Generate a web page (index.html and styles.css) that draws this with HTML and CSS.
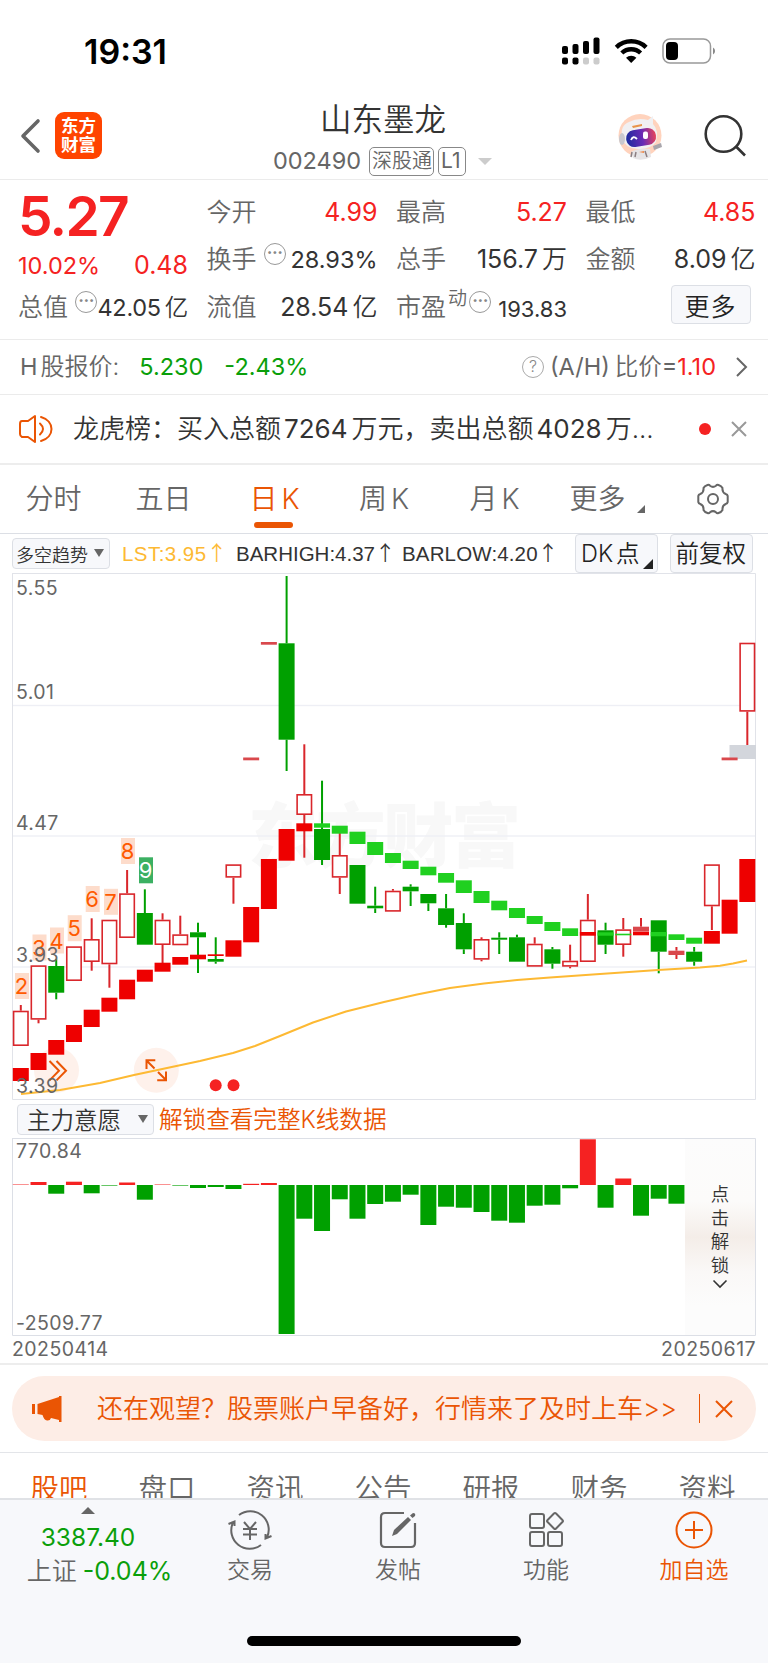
FILE: index.html
```html
<!DOCTYPE html>
<html lang="zh-CN">

<head>
    <meta charset="UTF-8">
    <meta name="viewport" content="width=device-width, initial-scale=1.0">
    <title>山东墨龙 002490</title>
    <link rel="stylesheet" href="styles.css">
</head>

<body>

    <div class="status-bar">
        <span class="clock">19:31</span>
        <svg class="status-icons" width="156" height="30" viewBox="560 36 156 30">
            <g fill="#000">
                <rect x="562" y="46" width="6" height="8" rx="2"/>
                <rect x="572.500" y="44" width="6" height="10" rx="2"/>
                <rect x="583" y="41" width="6" height="13" rx="2"/>
                <rect x="593.500" y="37.500" width="6" height="16.500" rx="2"/>
                <rect x="562" y="57.500" width="6" height="7" rx="2"/>
                <rect x="572.500" y="57.500" width="6" height="7" rx="2"/>
            </g>
            <g fill="#ccc">
                <rect x="583" y="57.500" width="6" height="7" rx="2"/>
                <rect x="593.500" y="57.500" width="6" height="7" rx="2"/>
            </g>
            <g fill="none" stroke="#000" stroke-width="4.400">
                <path d="M616.300 47.300a21.500 21.500 0 0 1 29.800 0"/>
                <path d="M621.800 53a13.600 13.600 0 0 1 18.800 0"/>
            </g>
            <path d="M631.200 63l-5.200-5.200a7.600 7.600 0 0 1 10.400 0z"/>
            <rect x="663" y="39" width="47.500" height="24" rx="7" fill="none" stroke="#999" stroke-width="1.500"/>
            <rect x="666" y="42" width="12" height="18" rx="4"/>
            <path d="M713 47.500a4 4 0 0 1 0 7z" fill="#888"/>
        </svg>
    </div>

    <header class="header">
        <svg class="back" width="22" height="36" viewBox="0 0 22 36"><path d="M18 3L3 18l15 15" fill="none" stroke="#666" stroke-width="3.600" stroke-linecap="round" stroke-linejoin="round"/></svg>
        <div class="logo"><span>东方</span><span>财富</span></div>
        <div class="title">
            <h1>山东墨龙</h1>
            <div class="code">
                <span class="code-num">002490</span>
                <span class="tag">深股通</span>
                <span class="tag tag-l1">L1</span>
                <i class="tri-down"></i>
            </div>
        </div>
        <svg class="robot" width="46" height="48" viewBox="0 0 46 48">
            <circle cx="23" cy="22.500" r="21.500" fill="#ffd3bd"/>
            <path d="M14 39q9-5 19-3l1 8q-10 5-18 1z" fill="#e6e4e6"/>
            <path d="M15 39l-1 5m5-5l-1 5m10-6l2 6" stroke="#8c7f82" stroke-width="1.500" fill="none"/>
            <path d="M36 33l8-3 1 4-8 3z" fill="#a9a6ac"/>
            <path d="M5 25Q3 12 12 9q9-5 19-2l5-4 0 8q6 6 3 18-4 6-16 7-14 1-18-11z" fill="#f1f0f2"/>
            <ellipse cx="5" cy="26" rx="3" ry="6" fill="#c9c8ce"/>
            <path d="M15 13l10-2v2l-9 2z" fill="#e8944a"/>
            <rect x="9" y="16" width="30" height="17" rx="8" transform="rotate(-9 24 24)" fill="url(#visor)"/>
            <path d="M14 27q2-5 6-1" stroke="#fff" stroke-width="1.800" fill="none"/>
            <rect x="26" y="18.500" width="5" height="7.500" rx="2" fill="#fff"/>
            <path d="M22 39l5-1v2z" fill="#ee8848"/>
            <defs><linearGradient id="visor"><stop offset="0" stop-color="#1c2b9e"/><stop offset=".55" stop-color="#6a2bb5"/><stop offset="1" stop-color="#e8435a"/></linearGradient></defs>
        </svg>
        <svg class="search" width="44" height="44" viewBox="0 0 44 44"><g fill="none" stroke="#333" stroke-width="2.600"><circle cx="20.500" cy="20" r="17.800"/><path d="M32.500 32l9.500 9.500"/></g></svg>
    </header>

    <section class="quote">
        <div class="price-block">
            <div class="price">5.27</div>
            <div class="cell change"><span class="pct">10.02%</span><b class="up">0.48</b></div>
        </div>
        <div class="cell"><span>今开</span><b class="up">4.99</b></div>
        <div class="cell"><span>最高</span><b class="up">5.27</b></div>
        <div class="cell"><span>最低</span><b class="up">4.85</b></div>
        <div class="cell"><span>换手</span><i class="dots">···</i><b class="small">28.93%</b></div>
        <div class="cell"><span>总手</span><b>156.7<em>万</em></b></div>
        <div class="cell"><span>金额</span><b>8.09<em>亿</em></b></div>
        <div class="cell"><span>总值</span><i class="dots">···</i><b class="small tight">42.05<em>亿</em></b></div>
        <div class="cell"><span>流值</span><b>28.54<em>亿</em></b></div>
        <div class="cell"><span>市盈</span><sup>动</sup><i class="dots near">···</i><b class="smaller">193.83</b></div>
        <div class="cell"><button class="more">更多</button></div>
    </section>

    <section class="h-share">
        <span class="h-label">H<em>股报价:</em></span>
        <span class="down h-price">5.230</span>
        <span class="down">-2.43%</span>
        <span class="help">?</span>
        <span class="ratio">(A/H)<em>比价</em>=<span class="up">1.10</span></span>
        <svg width="14" height="22" viewBox="0 0 14 22"><path d="M2 2l9 9-9 9" fill="none" stroke="#666" stroke-width="2"/></svg>
    </section>

    <section class="notice">
        <svg width="34" height="30" viewBox="0 0 34 30"><g fill="none" stroke="#ea5504" stroke-width="2" stroke-linejoin="round" stroke-linecap="round"><path d="M16 2v26l-7-5H3q-2-1-2-3V10q0-3 2-3h6z"/><path d="M21 9.500q6 5.500 0 11M22 3c14 4 14 20 0 24"/></g></svg>
        <p>龙虎榜：买入总额<em>7264</em>万元，卖出总额<em>4028</em>万...</p>
        <i class="red-dot"></i>
        <svg width="18" height="18" viewBox="0 0 18 18"><path d="M2 2l14 14M16 2L2 16" stroke="#999" stroke-width="2"/></svg>
    </section>

    <nav class="tabs">
        <span class="tab-time">分时</span>
        <span>五日</span>
        <span class="active">日<em>K</em></span>
        <span>周<em>K</em></span>
        <span class="tab-month">月<em>K</em></span>
        <span class="tab-more">更多<i class="corner"></i></span>
        <span><svg width="34" height="34" viewBox="-17 -17 34 34"><g fill="none" stroke="#666" stroke-width="2"><circle r="5"/><path stroke-linejoin="round" d="M-5.500-14Q-4-14.500-3-13.300Q0-11 3-13.300Q4-14.500 5.500-14Q8.500-13 9.500-11Q9-6.500 12.700-5Q14.500-4.500 14.700-3V3Q14.500 4.500 12.700 5Q9 6.500 9.500 11Q8.500 13 5.500 14Q4 14.500 3 13.300Q0 11-3 13.300Q-4 14.500-5.500 14Q-8.500 13-9.500 11Q-9 6.500-12.700 5Q-14.500 4.500-14.700 3V-3Q-14.500-4.500-12.700-5Q-9-6.500-9.500-11Q-8.500-13-5.500-14z"/></g></svg></span>
    </nav>

    <div class="indicator">
        <span class="select">多空趋势<i></i></span>
        <span class="lst">LST:3.95<u>↑</u></span>
        <span class="bar-high">BARHIGH:4.37<u>↑</u></span>
        <span class="bar-low">BARLOW:4.20<u>↑</u></span>
        <span class="box dk">DK<em>点</em><i></i></span>
        <span class="box">前复权</span>
    </div>

    <svg class="k-chart" id="k-chart" width="744" height="527" viewBox="12 573 744 527"></svg>

    <div class="sub-bar">
        <span class="select select-big">主力意愿<i></i></span>
        <span class="unlock-text">解锁查看完整K线数据</span>
    </div>

    <div class="sub-wrap">
        <svg id="sub-chart" width="744" height="198" viewBox="12 1138 744 198"></svg>
        <div class="lock">
            <span>点</span><span>击</span><span>解</span><span>锁</span>
            <svg width="16" height="10" viewBox="0 0 16 10"><path d="M1.500 1.500L8 8l6.500-6.500" fill="none" stroke="#333" stroke-width="1.600"/></svg>
        </div>
    </div>

    <div class="dates"><span>20250414</span><span>20250617</span></div>

    <div class="banner-row">
        <div class="banner">
            <svg width="32" height="28" viewBox="0 0 32 28" fill="#ea5504"><path d="M1 9h3v10H1zM6.500 9L28 2V1h2.500v26H28v-2l-8-2q-1 3-4 2.500T11.500 20L6.500 19z"/></svg>
            <p>还在观望？股票账户早备好，行情来了及时上车&gt;&gt;</p>
            <i></i>
            <svg width="18" height="18" viewBox="0 0 18 18"><path d="M1 1l16 16M17 1L1 17" stroke="#ea5504" stroke-width="2"/></svg>
        </div>
    </div>

    <nav class="info-tabs">
        <span class="active">股吧</span>
        <span>盘口</span>
        <span>资讯</span>
        <span>公告</span>
        <span>研报</span>
        <span>财务</span>
        <span>资料</span>
    </nav>

    <footer class="footer">
        <div class="index">
            <i></i>
            <div class="down">3387.40</div>
            <div class="index-row"><span>上证</span><span class="down">-0.04%</span></div>
        </div>
        <div class="action">
            <svg width="46" height="40" viewBox="-23 -20 46 40"><g fill="none" stroke="#666" stroke-width="2"><path d="M-11-15A18.500 18.500 0 0 1 17 7.500M21.500 6L15.500 8.500V4"/><path d="M11 15A18.500 18.500 0 0 1-17-7.500M-21.500-6L-15.500-8.500V-4"/><path d="M-6-8L0-1l6-7M0-1V10M-7-1H7M-7 4.500H7"/></g></svg>
            <span>交易</span>
        </div>
        <div class="action">
            <svg width="46" height="40" viewBox="-23 -20 46 40"><path d="M6-17H-13q-4 0-4 4V13q0 4 4 4H13q4 0 4-4V-7" fill="none" stroke="#666" stroke-width="2.200"/><path d="M-6 6l2-6L10-13l3 3L-1 4z" fill="#666"/><path d="M12-14.500l3-2.500q3 0 2 3l-2.500 2z" fill="#666"/></svg>
            <span>发帖</span>
        </div>
        <div class="action">
            <svg width="46" height="40" viewBox="-23 -20 46 40"><g fill="none" stroke="#666" stroke-width="2"><rect x="-16" y="-16" width="14" height="14" rx="2"/><rect x="-16" y="2" width="14" height="14" rx="2"/><rect x="2" y="2" width="14" height="14" rx="2"/><rect x="3" y="-15" width="12" height="12" rx="1.500" transform="rotate(45 9 -9)"/></g></svg>
            <span>功能</span>
        </div>
        <div class="action add">
            <svg width="46" height="40" viewBox="-23 -20 46 40"><g fill="none" stroke="#ea5504" stroke-width="2"><circle r="17.500"/><path d="M-9 0H9M0-9V9"/></g></svg>
            <span>加自选</span>
        </div>
        <div class="home-line"></div>
    </footer>

    <script src="chart.js"></script>
</body>

</html>
```
FILE: styles.css
```css
* {
    box-sizing: border-box;
}

body {
    margin: 0;
    width: 768px;
    height: 1663px;
    overflow: hidden;
    background: #fff;
    color: #333;
    font-family: Inter, "Noto Sans CJK SC", sans-serif;
    font-weight: 350;
    line-height: 1;
    display: flex;
    flex-direction: column;
}

body > * {
    flex: none;
}

svg {
    display: block;
    flex: none;
}

em, i, b, u {
    font-style: normal;
    font-weight: 350;
    text-decoration: none;
}

.up {
    color: #f52222;
    font-weight: 400;
}

.down {
    color: #0a9f0a;
    font-weight: 400;
}

/* status bar */
.status-bar {
    height: 92px;
    padding: 36px 52px 0 84px;
    display: flex;
    justify-content: space-between;
}

.clock {
    font-size: 34px;
    font-weight: 600;
    line-height: 31px;
    color: #000;
}

/* header */
.header {
    height: 88px;
    padding: 0 21px 0 20px;
    display: flex;
    border-bottom: 1px solid #ebebeb;
}

.back {
    margin-top: 26px;
}

.logo {
    width: 47px;
    height: 47px;
    margin: 20px 0 0 13px;
    border-radius: 9px;
    background: #ff4400;
    color: #fff;
    font-size: 17.500px;
    font-weight: 700;
    line-height: 19px;
    padding-top: 4px;
    display: flex;
    flex-direction: column;
    align-items: center;
}

.title {
    width: 562px;
    display: flex;
    flex-direction: column;
    align-items: center;
    margin-right: -48px;
}

.title h1 {
    margin: 10px 0 0;
    font-size: 31.500px;
    font-weight: 350;
    line-height: 36px;
}

.code {
    display: flex;
    align-items: center;
    height: 30px;
    margin-top: 8px;
    margin-left: -1px;
    color: #666;
}

.code-num {
    font-size: 23.500px;
    font-weight: 400;
    margin-right: 8px;
}

.tag {
    height: 29px;
    border: 1.500px solid #888;
    border-radius: 5px;
    font-size: 20px;
    line-height: 26px;
    padding: 0 2px;
    width: 65px;
    margin-right: 4px;
    white-space: nowrap;
}

.tag-l1 {
    width: 28px;
    font-size: 21px;
    font-weight: 400;
}

.tri-down {
    border: 7px solid transparent;
    border-top-color: #ccc;
    border-bottom: 0;
    margin-left: 8px;
}

.robot {
    margin-top: 21px;
    margin-left: auto;
}

.search {
    margin: 22px 0 0 40px;
}

/* quote */
.quote {
    height: 160px;
    padding: 8.500px 12.500px 0 18px;
    display: grid;
    grid-template-columns: 170px 171px 171px 170px;
    grid-template-rows: repeat(3, 47.500px);
    column-gap: 18.500px;
    border-bottom: 1px solid #ebebeb;
}

.price-block {
    grid-row: span 2;
}

.price {
    color: #f52222;
    font-size: 55px;
    font-weight: 600;
    line-height: 54px;
    letter-spacing: -1.700px;
}

.change {
    height: 40px;
    padding-top: 6px;
}

.change .pct {
    color: #f52222;
    font-size: 23.500px;
    font-weight: 400;
}

.cell {
    display: flex;
    align-items: center;
    color: #666;
    font-size: 25px;
    white-space: nowrap;
}

.cell b {
    margin-left: auto;
    color: #333;
    font-weight: 400;
}

.cell b.up {
    color: #f52222;
}

.cell b em {
    margin-left: 4px;
}

.cell .small {
    font-size: 23.500px;
}

.cell .tight {
    letter-spacing: -0.300px;
}

.cell .smaller {
    font-size: 22px;
    padding-top: 4px;
}

.cell sup {
    font-size: 19px;
    line-height: 19px;
    margin: -18px 0 0 2px;
    vertical-align: baseline;
}

.dots {
    width: 22px;
    height: 22px;
    border: 1.500px solid #999;
    border-radius: 50%;
    margin: -11px -10px 0 7px;
    color: #888;
    font-size: 18px;
    font-weight: 600;
    line-height: 18px;
    text-align: center;
    letter-spacing: -0.500px;
}

.dots.near {
    margin-left: 2px;
}

.more {
    margin: -5px 5px 0 auto;
    width: 80px;
    height: 39px;
    padding: 0;
    border: 1.500px solid #dcdfe5;
    border-radius: 4px;
    background: #f7f8fb;
    font: 350 25px/34px "Noto Sans CJK SC", sans-serif;
    letter-spacing: 1px;
    color: #222;
}

/* H share */
.h-share {
    height: 55px;
    padding: 0 19px 0 20px;
    display: flex;
    align-items: center;
    font-size: 23.500px;
    color: #666;
    border-bottom: 1px solid #ebebeb;
}

.h-label {
    font-weight: 400;
}

.h-label em {
    margin-left: 3px;
    font-size: 24px;
}

.h-price {
    margin: 0 21px 0 20px;
}

.help {
    margin: 0 6px 0 auto;
    width: 22px;
    height: 22px;
    border: 1.500px solid #aaa;
    border-radius: 50%;
    font-size: 16px;
    line-height: 19px;
    text-align: center;
    color: #888;
}

.ratio {
    margin-right: 19px;
    font-weight: 400;
}

.ratio em {
    margin-left: 5px;
}

/* notice */
.notice {
    height: 70px;
    padding: 0 20px 0 19px;
    display: flex;
    align-items: center;
    border-bottom: 2px solid #ededed;
}

.notice p {
    margin: 0 0 0 20px;
    font-size: 26px;
    white-space: nowrap;
}

.notice em {
    margin: 0 4px 0 3px;
    font-weight: 400;
}

.red-dot {
    width: 12px;
    height: 12px;
    border-radius: 50%;
    background: #f52222;
    margin: 0 19px 0 auto;
}

/* period tabs */
.tabs {
    height: 69px;
    display: grid;
    grid-template-columns: 109px 109px 113px 106px 112px 109px 110px;
    align-items: center;
    justify-items: center;
    font-size: 28px;
    color: #666;
    border-bottom: 1px solid #dcdfe5;
}

.tabs span {
    position: relative;
}

.tabs em {
    margin-left: 4px;
}

.tabs .tab-time {
    margin-right: 2px;
}

.tabs .tab-month {
    margin-left: 3px;
}

.tabs .tab-more {
    margin-right: 12px;
}

.tabs .active {
    color: #ea5504;
}

.tabs .active::after {
    content: "";
    position: absolute;
    left: 5px;
    bottom: -15px;
    width: 39px;
    height: 6px;
    border-radius: 3px;
    background: #ea5504;
}

.corner {
    position: absolute;
    right: -19px;
    bottom: 0;
    border: 4px solid #666;
    border-left-color: transparent;
    border-top-color: transparent;
}

/* indicator row */
.indicator {
    height: 39px;
    padding: 0 15.500px 0 12px;
    display: flex;
    align-items: center;
    font-family: "Liberation Sans", "Noto Sans CJK SC", sans-serif;
    font-size: 20.500px;
    white-space: nowrap;
}

.select {
    width: 98px;
    height: 31px;
    border: 1.500px solid #dcdfe5;
    border-radius: 4px;
    background: #f7f8fb;
    padding-left: 3px;
    font-family: "Noto Sans CJK SC", sans-serif;
    font-size: 18px;
    display: flex;
    align-items: center;
}

.select i {
    border: 5px solid transparent;
    border-top: 8px solid #666;
    border-bottom: 0;
    margin: -2px 0 0 6px;
}

.indicator u {
    font-family: "Noto Sans CJK SC", sans-serif;
    display: inline-block;
    width: 16px;
}

.lst {
    color: #fdb933;
    width: 101px;
    margin-left: 12px;
    letter-spacing: 0.450px;
}

.bar-high {
    width: 154px;
    margin-left: 13px;
}

.bar-low {
    margin-left: 12px;
    letter-spacing: 0.150px;
}

.box {
    position: relative;
    width: 83px;
    height: 39px;
    border: 1.500px solid #dcdfe5;
    border-radius: 4px;
    background: #f7f8fb;
    font: 350 23.500px/37px Inter, "Noto Sans CJK SC", sans-serif;
    padding-left: 5px;
    color: #222;
}

.dk {
    margin: 0 11.500px 0 auto;
}

.dk em {
    margin-left: 3px;
}

.dk i {
    position: absolute;
    right: 4px;
    bottom: 3px;
    border: 5.500px solid #222;
    border-left-color: transparent;
    border-top-color: transparent;
}

/* charts */
.k-chart {
    margin-left: 12px;
}

.axis {
    font: 400 19.500px Inter, sans-serif;
    fill: #666;
    letter-spacing: 0.400px;
}

.mark {
    font: 400 22px Inter, sans-serif;
    text-anchor: middle;
}

.watermark {
    font: 900 70px "Noto Sans CJK SC", sans-serif;
    fill: #f8f8f8;
}

.sub-bar {
    height: 38px;
    padding: 1px 0 0 17px;
    display: flex;
    align-items: center;
}

.select-big {
    width: 137px;
    font-size: 23.500px;
    padding-left: 9px;
}

.select-big i {
    margin-left: 17px;
}

.unlock-text {
    margin-left: 5px;
    color: #ea5504;
    font-size: 23.700px;
    letter-spacing: -0.100px;
}

.sub-wrap {
    height: 198px;
    padding-left: 12px;
    position: relative;
}

/* the unlock panel covers the last four bars */
.lock {
    position: absolute;
    left: 685px;
    top: 1px;
    width: 70px;
    height: 196px;
    padding-top: 44px;
    background: linear-gradient(#fcfcfc, #fcfbfa 32%, #f4ede8 50%, #faf8f7 68%, #fcfcfc 85%);
    display: flex;
    flex-direction: column;
    align-items: center;
    font-size: 18.500px;
    line-height: 23.500px;
}

.lock svg {
    margin-top: 2px;
}

.dates {
    height: 29px;
    padding: 0 12px;
    display: flex;
    justify-content: space-between;
    align-items: center;
    font-size: 19.500px;
    font-weight: 400;
    letter-spacing: 0.450px;
    color: #666;
    border-bottom: 2px solid #ededed;
}

/* banner */
.banner-row {
    height: 88px;
    padding: 11px 12px;
    border-bottom: 1px solid #e3e5e9;
}

.banner {
    height: 65px;
    border-radius: 33px;
    background: #fdede6;
    color: #ea5504;
    padding: 0 23px 0 19px;
    display: flex;
    align-items: center;
}

.banner p {
    margin: 0 0 0 34px;
    font-size: 26px;
    white-space: nowrap;
}

.banner i {
    width: 1px;
    height: 29px;
    background: #ea5504;
    margin: 0 15px 0 auto;
}

/* info tabs, cut off by the footer */
.info-tabs {
    height: 45px;
    overflow: hidden;
    padding: 19px 7px 0 5px;
    display: grid;
    grid-template-columns: repeat(7, 1fr);
    justify-items: center;
    font-size: 28.500px;
    line-height: 34px;
    color: #666;
}

.info-tabs .active {
    color: #ea5504;
}

/* footer */
.footer {
    height: 165px;
    border-top: 2px solid #e0e2e6;
    background: #f7f8fb;
    display: grid;
    grid-template-columns: 176px repeat(4, 148px);
    grid-template-rows: 136px 12px;
    color: #666;
    font-size: 23px;
}

.index {
    display: flex;
    flex-direction: column;
    align-items: center;
    padding-top: 7px;
    font-size: 24.500px;
}

.index > i {
    border: 7px solid transparent;
    border-bottom-color: #666;
    border-top: 0;
    margin-bottom: 11px;
}

.index-row {
    display: flex;
    margin: 9px 0 0 23px;
    gap: 6px;
    font-size: 25px;
}

.action {
    display: flex;
    flex-direction: column;
    align-items: center;
    gap: 9px;
    padding-top: 10px;
}

.add {
    color: #ea5504;
}

.home-line {
    grid-column: 1 / -1;
    justify-self: center;
    width: 274px;
    height: 10px;
    border-radius: 5px;
    background: #000;
}
```
FILE: chart.js
```js
const RED = '#d9262b';
const GREEN = '#00a000';
const STEP = 17.72;
const FIRST = 20.8;

// candles: [kind, high, top, bottom, low]; r = hollow red, g = solid green, d = dash, p = thin solid red
const candles = [
    ['r', 1005, 1010.7, 1046, 1046], ['r', 965.3, 965.3, 1019.7, 1023.3], ['g', 959.3, 966, 992.7, 999.3],
    ['r', 946.3, 946.3, 981, 981], ['r', 918.3, 939, 962, 970.7], ['r', 919.7, 919.7, 964.3, 987.7],
    ['r', 870, 893.3, 938, 938], ['g', 889.3, 913, 944.7, 944.7], ['r', 913.3, 919.7, 945, 963.3],
    ['r', 915.7, 934.3, 945.3, 945.3], ['g', 922.7, 932.3, 937.3, 973], ['g', 937.3, 959, 961.7, 963.7],
    ['r', 864.3, 864.3, 877.7, 903.7], ['d', 757.5, 757.5, 760.3, 760.3], ['d', 642, 642, 644.7, 644.7],
    ['g', 576, 643.3, 739.7, 771], ['r', 744.3, 794, 815, 857.7], ['g', 780.7, 829, 860, 865],
    ['r', 833, 855, 877.7, 894], ['g', 865, 865, 903.7, 903.7], ['g', 886.7, 905.7, 908.3, 913],
    ['r', 889, 890.7, 911.7, 911.7], ['g', 884.3, 886.7, 891.3, 906], ['g', 894, 894, 903.3, 911],
    ['g', 894, 908.3, 925, 927.7], ['g', 913.3, 923, 949.3, 954], ['r', 937.3, 939, 959.7, 961.3],
    ['g', 932.3, 937.7, 939.7, 954], ['g', 934.7, 937.3, 961.7, 961.7], ['r', 937.3, 943.7, 966.7, 966.7],
    ['g', 947, 949.3, 963.7, 968.7], ['r', 944.7, 960.7, 966.7, 968.3], ['r', 894, 919.7, 962, 962],
    ['g', 922.7, 930.3, 944.7, 954], ['r', 918, 929.3, 945, 956.7], ['p', 918, 926.7, 931.5, 931.5],
    ['g', 920.3, 920.3, 951.7, 973.3], ['p', 947, 950.7, 955, 959], ['g', 947, 951.7, 961.7, 965.7],
    ['r', 864.3, 864.3, 906.3, 930], ['d', 757.5, 757.5, 760.3, 760.3], ['r', 642.7, 642.7, 711.7, 745]
];

// trend blocks: [top, bottom, isRed]
const trend = [
    [1068, 1081, 1], [1053, 1070, 1], [1040, 1054.7, 1], [1025, 1042, 1], [1009.7, 1027, 1], [997.7, 1011.7, 1],
    [979.7, 999.3, 1], [969.7, 981.7, 1], [962.7, 971.7, 1], [957, 964.7, 1], [954.7, 959.3, 1], [954.3, 956, 1],
    [940.3, 956.7, 1], [907, 942.3, 1], [859, 909, 1], [829, 860.7, 1], [823.3, 831.3, 1], [823.3, 827.7, 0],
    [825.7, 833.7, 0], [831.7, 844, 0], [842, 855, 0], [853, 863, 0], [860.7, 869, 0], [866.7, 875.3, 0],
    [873, 882.7, 0], [880.3, 893, 0], [891, 903, 0], [900.7, 910.3, 0], [908, 918, 0], [916, 924, 0],
    [922, 931, 0], [928.3, 936, 0], [932, 935.7, 1], [932.3, 935.7, 0], [933.7, 935.3, 0], [931.7, 935.3, 1],
    [932, 936.3, 0], [934.3, 940, 0], [937.7, 943.7, 0], [931, 943.7, 1], [899.7, 933.7, 1], [859, 902, 1]
];

// main force bars, in px above (+) or below (-) the zero line
const force = [0.5, 3, -8.7, 3.3, -8.3, -0.6, 2.5, -14.7, 0.5, -0.6, -3, -2, -4, 1.2, 2, -149, -33.7, -46,
    -14.3, -33.7, -19, -16.7, -9.7, -40, -21.7, -22.7, -27, -35.7, -37.7, -20.7, -19.7, -3.3, 45.7, -22.7,
    6.5, -30.7, -13.7, -18.7];

const marks = [[2, 22, 973], [3, 39.5, 934.5], [4, 57, 927.5], [5, 74.7, 915.2], [6, 92.7, 886], [7, 111, 888.8],
    [8, 128, 838], [9, 146, 857.3]];

const line = [[21, 1094], [60, 1090], [100, 1083], [134, 1075], [167, 1068], [200, 1061], [233, 1053], [255, 1046],
    [280, 1036], [313, 1022.5], [346, 1011.5], [384, 1002], [417, 994.5], [450, 988], [484, 983.5], [517, 980],
    [550, 977.5], [600, 974], [658, 970], [700, 967.5], [720, 965.7], [733, 963.5], [747, 960.5]];

function rect(x, y, w, h, attrs) {
    return `<rect x="${x}" y="${y}" width="${w}" height="${h}" ${attrs}/>`;
}

function drawCandle(c, i) {
    const [kind, high, top, bottom, low] = c;
    const x = FIRST + STEP * i;
    const color = kind === 'g' ? GREEN : RED;
    let out = '';
    if (high < top) out += rect(x - 1, high, 2, top - high, `fill="${color}"`);
    if (low > bottom) out += rect(x - 1, bottom, 2, low - bottom, `fill="${color}"`);
    if (kind === 'r') {
        out += rect(x - 7.2, top + 0.8, 14.4, bottom - top - 1.6, `fill="#fff" stroke="${color}" stroke-width="1.6"`);
    } else {
        out += rect(x - 8, top, 16, bottom - top, `fill="${kind === 'g' ? color : '#d9484c'}"`);
    }
    return out;
}

function drawKChart() {
    let out = '<text class="watermark" x="248" y="862" textLength="273">东方财富</text>';
    [705.5, 836, 967].forEach(y => out += rect(12, y - 0.7, 744, 1.4, 'fill="#eeeff5"'));
    out += '<path d="M12 573.5H755.500V1099.500H12.500V573" fill="none" stroke="#e1e3e9"/>';
    out += rect(729.5, 745, 26.5, 14, 'fill="#d3d6dc"');
    // round chart buttons
    out += '<g fill="#fef1eb"><circle cx="56.500" cy="1070.300" r="22.500"/><circle cx="156.300" cy="1070.300" r="22.500"/></g>';
    candles.forEach((c, i) => out += drawCandle(c, i));
    trend.forEach(([t, b, red], i) => {
        out += rect(FIRST + STEP * i - 8, t, 16, b - t, `fill="${red ? '#ee0000' : '#20d020'}"`);
    });
    marks.forEach(([n, x, y]) => {
        out += rect(x - 7, y, 14, 26, `fill="${n === 9 ? '#3bb062' : '#fddccb'}"`);
        out += `<text class="mark" x="${x - 0.5}" y="${y + 21}" fill="${n === 9 ? '#fff' : '#ff5a00'}">${n}</text>`;
    });
    [['5.55', 594.5], ['5.01', 699], ['4.47', 830], ['3.93', 962]].forEach(([t, y]) => {
        out += `<text class="axis" x="16" y="${y}">${t}</text>`;
    });
    out += `<polyline points="${line.join(' ')}" fill="none" stroke="#fdb933" stroke-width="2" stroke-linejoin="round"/>`;
    out += '<g fill="none" stroke="#ea5504" stroke-width="2"><path d="M49.500 1061l9.500 9.700-9.500 9.700M56.500 1061l9.500 9.700-9.500 9.700"/>'
        + '<path d="M154.500 1068.500l-8-8M146.500 1069v-8.800h8.800M158 1072l8 8M166 1071.500v8.800h-8.800"/></g>';
    out += '<text class="axis" x="16" y="1093">3.39</text>';
    out += '<g fill="#f52222"><circle cx="215.700" cy="1085.300" r="6"/><circle cx="233.500" cy="1085.300" r="6"/></g>';
    document.getElementById('k-chart').innerHTML = out;
}

function drawSubChart() {
    let out = '<path d="M12 1138.500H755.500V1335.500H12.500V1138" fill="none" stroke="#dcdfe6"/>';
    force.forEach((v, i) => {
        out += rect(FIRST + STEP * i - 8, v > 0 ? 1185 - v : 1185, 16, Math.abs(v), `fill="${v > 0 ? '#f52222' : GREEN}"`);
    });
    out += '<text class="axis" x="16" y="1158">770.84</text>';
    out += '<text class="axis" x="16" y="1330">-2509.77</text>';
    document.getElementById('sub-chart').innerHTML = out;
}

drawKChart();
drawSubChart();
```
